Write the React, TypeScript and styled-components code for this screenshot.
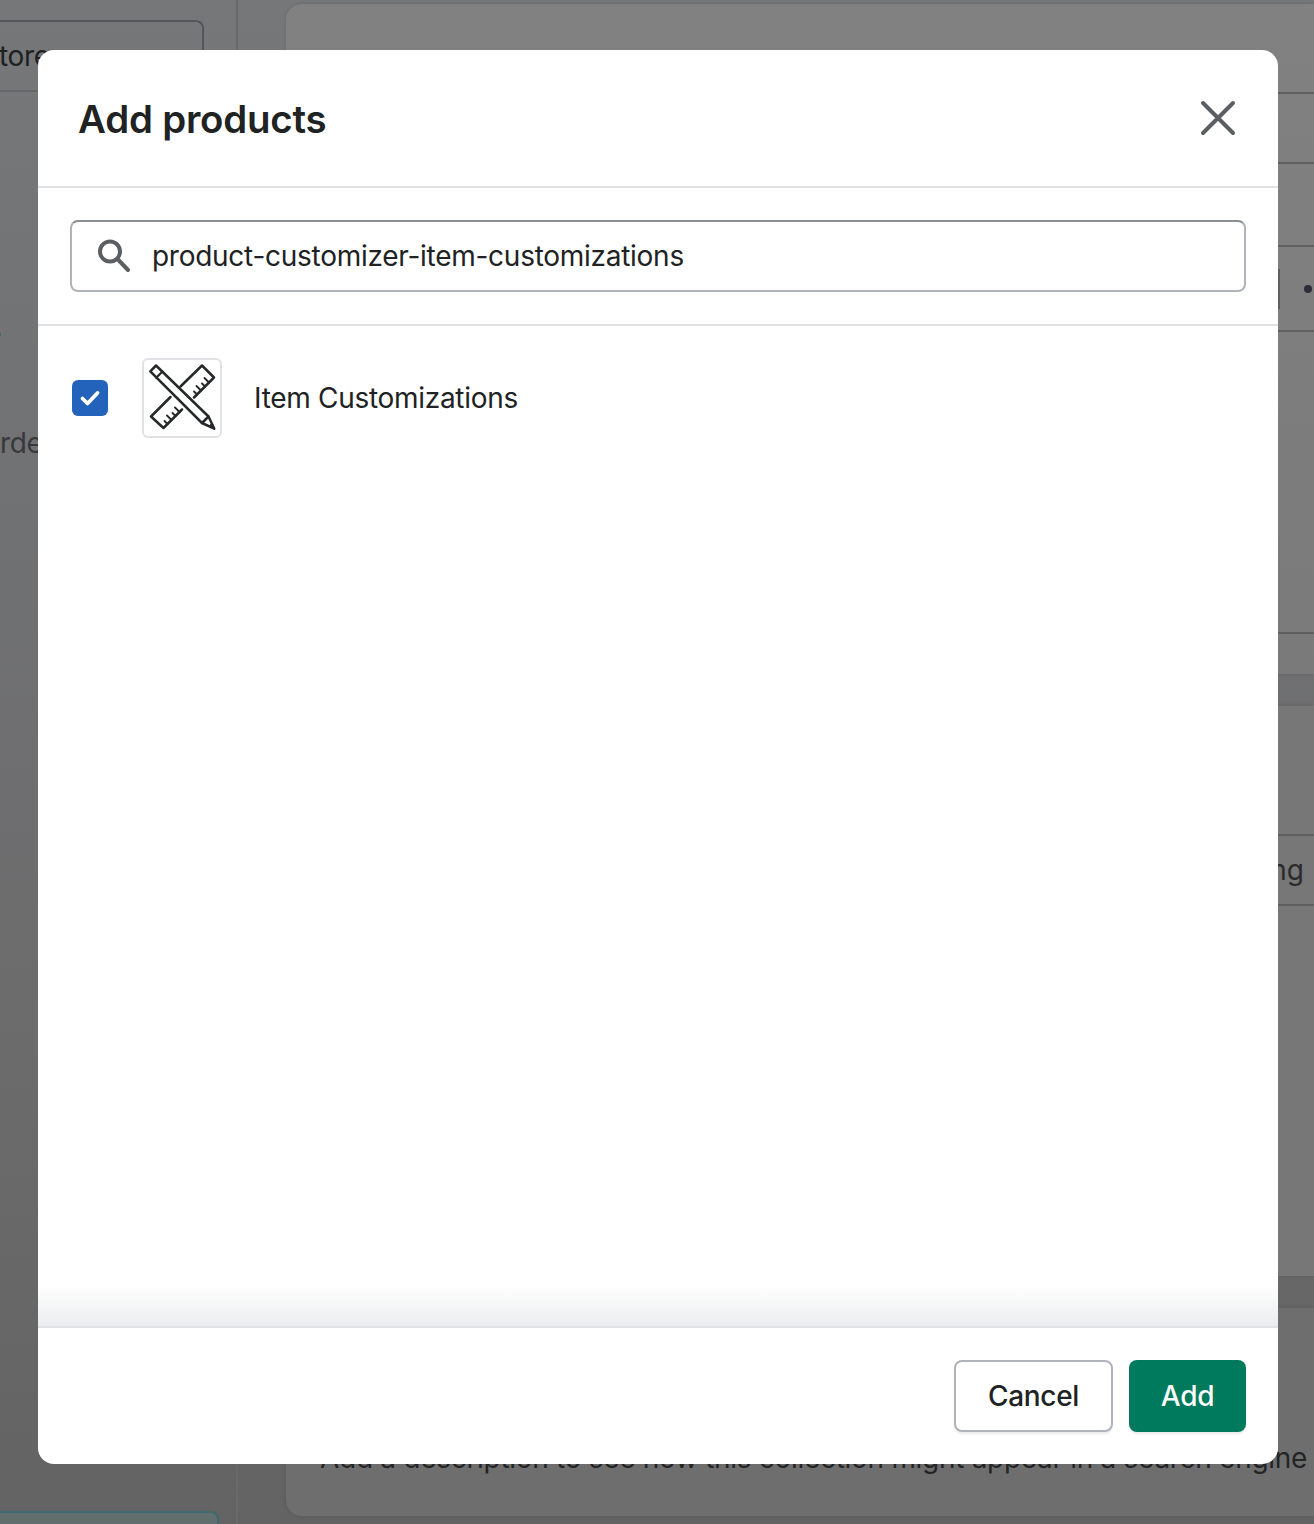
import React from "react";
import styled, { createGlobalStyle } from "styled-components";

const Global = createGlobalStyle`
  html, body { margin: 0; padding: 0; }
  body { font-family: Inter, "Liberation Sans", sans-serif; color: #202223; }
  * { box-sizing: border-box; }
`;

const Page = styled.div`
  position: relative;
  width: 1314px;
  height: 1524px;
  overflow: hidden;
  display: flex;
  background: linear-gradient(180deg, #767779 0%, #6b6b6c 70%, #636364 100%);
`;

const Sidebar = styled.aside`
  width: 238px;
  flex: none;
  border-right: 2px solid #69696c;
  display: flex;
  flex-direction: column;
  overflow: hidden;
  padding-top: 20px;
`;

const StoreBox = styled.div`
  width: 204px;
  height: 72px;
  flex: none;
  border: 2px solid #55565a;
  border-left: 0;
  border-top-right-radius: 8px;
  border-bottom: 2px solid #66676a;
  border-right-width: 2px;
  border-bottom-right-radius: 0;
  display: flex;
  align-items: center;
  overflow: hidden;
`;

const StoreLabel = styled.span`
  font-size: 28px;
  line-height: 32px;
  letter-spacing: -0.3px;
  color: #1f2022;
  white-space: nowrap;
  margin-left: -1px;
`;

const NavLabel = styled.div`
  font-size: 28px;
  line-height: 32px;
  letter-spacing: -0.3px;
  color: #38393c;
  white-space: nowrap;
`;

const NavTiny = styled(NavLabel)`
  margin-top: 221px;
  margin-left: -13px;
`;

const NavOrders = styled(NavLabel)`
  margin-top: 82px;
`;

const Spacer = styled.div`
  flex: 1;
`;

const TealBox = styled.div`
  width: 219px;
  height: 13px;
  flex: none;
  border: 2px solid #3f6a70;
  border-left: 0;
  border-bottom: 0;
  border-top-right-radius: 8px;
  background: #626e6e;
`;

const Main = styled.main`
  flex: 1;
  min-width: 0;
  padding: 4px 0 8px 48px;
  display: flex;
  flex-direction: column;
  gap: 32px;
`;

const Card = styled.section<{ $h?: number; $grow?: boolean }>`
  height: ${(p) => (p.$h ? `${p.$h}px` : "auto")};
  flex: ${(p) => (p.$grow ? 1 : "none")};
  border-radius: 16px 0 0 16px;
  background: linear-gradient(180deg, #818181 0%, #7a7a7b 100%);
  box-shadow: 0 0 4px rgba(0, 0, 0, 0.12);
  display: flex;
  flex-direction: column;
  overflow: hidden;
`;

const MidCard = styled(Card)`
  background: #777778;
`;

const LastCard = styled(Card)`
  background: #6e6e6f;
  border-radius: 16px 0 0 16px;
  padding: 134px 7px 0 0;
  align-items: flex-end;
`;

const CardRow = styled.div<{ $h: number }>`
  height: ${(p) => p.$h}px;
  flex: none;
  border-bottom: 2px solid #5f5f61;
  display: flex;
  align-items: center;
  justify-content: flex-end;
  padding-right: 10px;
  gap: 24px;
`;

const PlainRow = styled.div<{ $h: number }>`
  height: ${(p) => p.$h}px;
  flex: none;
`;

const RowDivider = styled.div`
  width: 2px;
  height: 40px;
  background: #5e5e60;
`;

const RowDot = styled.div`
  width: 8px;
  height: 8px;
  border-radius: 50%;
  background: #2b2d36;
  margin-right: -8px;
`;

const RowText = styled.span`
  font-size: 28px;
  line-height: 32px;
  color: #2a2b2d;
`;

const SeoText = styled.p`
  margin: 0;
  font-size: 28px;
  line-height: 32px;
  letter-spacing: -0.3px;
  color: #232426;
  white-space: nowrap;
`;

const Overlay = styled.div`
  position: absolute;
  inset: 0;
  padding: 50px 36px 60px 38px;
  display: flex;
`;

const Modal = styled.div`
  flex: 1;
  background: #fff;
  border-radius: 16px;
  display: flex;
  flex-direction: column;
  overflow: hidden;
`;

const Header = styled.header`
  height: 138px;
  flex: none;
  border-bottom: 2px solid #dfe1e4;
  padding: 0 42px 0 40px;
  display: flex;
  align-items: center;
  justify-content: space-between;
`;

const Title = styled.h2`
  margin: 2px 0 0;
  font-size: 38.4px;
  line-height: 48px;
  font-weight: 600;
  letter-spacing: -0.2px;
  color: #202223;
`;

const CloseButton = styled.button`
  width: 36px;
  height: 36px;
  padding: 0;
  border: 0;
  background: none;
  display: flex;
  align-items: center;
  justify-content: center;
  color: #5c5f62;
`;

const SearchSection = styled.div`
  height: 138px;
  flex: none;
  border-bottom: 2px solid #dfe1e4;
  padding: 32px;
`;

const SearchField = styled.div`
  height: 72px;
  border: 2px solid #aeb4b9;
  border-top-color: #898f94;
  border-radius: 8px;
  padding: 0 24px;
  display: flex;
  align-items: center;
  gap: 20px;
  color: #5c5f62;
`;

const SearchText = styled.span`
  font-size: 28px;
  line-height: 32px;
  letter-spacing: -0.27px;
  color: #202223;
`;

const Body = styled.div`
  flex: 1;
  padding: 32px 34px;
  position: relative;
`;

const ProductRow = styled.div`
  display: flex;
  align-items: center;
`;

const CheckBox = styled.div`
  width: 36px;
  height: 36px;
  flex: none;
  border-radius: 6px;
  background: #2463bc;
  display: flex;
  align-items: center;
  justify-content: center;
`;

const Thumb = styled.div`
  width: 80px;
  height: 80px;
  flex: none;
  margin-left: 34px;
  border: 2px solid #e0e2e5;
  border-radius: 6px;
  overflow: hidden;
`;

const ProductName = styled.span`
  margin-left: 32px;
  font-size: 28px;
  line-height: 32px;
  letter-spacing: -0.3px;
  color: #202223;
`;

const FooterShade = styled.div`
  position: absolute;
  left: 0;
  right: 0;
  bottom: 0;
  height: 40px;
  background: linear-gradient(180deg, rgba(235, 236, 238, 0) 0%, #ebecee 100%);
`;

const Footer = styled.footer`
  height: 138px;
  flex: none;
  border-top: 2px solid #dfe1e4;
  padding: 32px;
  display: flex;
  justify-content: flex-end;
  gap: 16px;
`;

const CancelButton = styled.button`
  width: 159px;
  height: 72px;
  border: 2px solid #b0b4ba;
  border-radius: 8px;
  background: #fff;
  box-shadow: 0 2px 2px rgba(0, 0, 0, 0.08);
  font: 500 28px/32px Inter, "Liberation Sans", sans-serif;
  letter-spacing: -0.3px;
  color: #202223;
`;

const AddButton = styled.button`
  width: 117px;
  height: 72px;
  border: 0;
  border-radius: 8px;
  background: #007a5c;
  box-shadow: 0 2px 2px rgba(0, 0, 0, 0.08);
  font: 500 28px/32px Inter, "Liberation Sans", sans-serif;
  letter-spacing: -0.3px;
  color: #fff;
`;

const ToolsIcon = () => (
  <svg width="76" height="76" viewBox="2 2 76 76" fill="none" stroke="#26282a" strokeWidth="2.5" strokeLinejoin="round" strokeLinecap="round">
    <path d="M8.3 13.3 14 7.5 66.5 58.5 60 65Z" />
    <path d="M14.2 19.8 20.5 13.5" strokeWidth="2.2" />
    <path d="M60 65 72.3 70.7 66.5 58.5" />
    <path d="M72.3 70.7 67 68.3 69.8 65.3Z" fill="#26282a" strokeWidth="1" />
    <path d="M38.5 28.5 60 7.5 72 19.5 52 39.5" />
    <path d="M28.5 39 9 58.5 21.5 70 40 51.5" />
    <path d="M55 36.5l-3-3M59 32.5l-4.5-4.5M63 28.5l-3-3M67 24.5l-4.5-4.5" strokeWidth="1.9" />
    <path d="M25.5 66l-3-3M29.5 62l-4.500-4.500M33.500 58l-3-3M37.500 54l-4.500-4.500" strokeWidth="1.9" />
  </svg>
);

export default function App() {
  return (
    <Page>
      <Global />
      <Sidebar>
        <StoreBox>
          <StoreLabel>tore</StoreLabel>
        </StoreBox>
        <NavTiny>s</NavTiny>
        <NavOrders>rders</NavOrders>
        <Spacer />
        <TealBox />
      </Sidebar>
      <Main>
        <Card $h={670}>
          <CardRow $h={90} />
          <CardRow $h={70} />
          <CardRow $h={83} />
          <CardRow $h={85}>
            <RowDivider />
            <RowDot />
          </CardRow>
          <CardRow $h={302} />
          <PlainRow $h={40} />
        </Card>
        <MidCard $h={570}>
          <PlainRow $h={128} />
          <CardRow $h={2} />
          <CardRow $h={70}>
            <RowText>ng</RowText>
          </CardRow>
        </MidCard>
        <LastCard $grow>
          <SeoText>Add a description to see how this collection might appear in a search engine</SeoText>
        </LastCard>
      </Main>
      <Overlay>
        <Modal>
          <Header>
            <Title>Add products</Title>
            <CloseButton aria-label="Close">
              <svg width="36" height="36" viewBox="0 0 36 36" fill="none" stroke="currentColor" strokeWidth="4" strokeLinecap="round">
                <path d="M3 3 33 33M33 3 3 33" />
              </svg>
            </CloseButton>
          </Header>
          <SearchSection>
            <SearchField>
              <svg width="36" height="36" viewBox="0 0 36 36" fill="none" stroke="currentColor" strokeWidth="4" strokeLinecap="round">
                <circle cx="14" cy="13.5" r="10" />
                <path d="M21.5 21 32 32" />
              </svg>
              <SearchText>product-customizer-item-customizations</SearchText>
            </SearchField>
          </SearchSection>
          <Body>
            <ProductRow>
              <CheckBox>
                <svg width="24" height="24" viewBox="0 0 24 24" fill="none" stroke="#fff" strokeWidth="3.8" strokeLinecap="round" strokeLinejoin="round">
                  <path d="M4.500 12.500 9.500 17.500 19.500 7" />
                </svg>
              </CheckBox>
              <Thumb>
                <ToolsIcon />
              </Thumb>
              <ProductName>Item Customizations</ProductName>
            </ProductRow>
            <FooterShade />
          </Body>
          <Footer>
            <CancelButton>Cancel</CancelButton>
            <AddButton>Add</AddButton>
          </Footer>
        </Modal>
      </Overlay>
    </Page>
  );
}
